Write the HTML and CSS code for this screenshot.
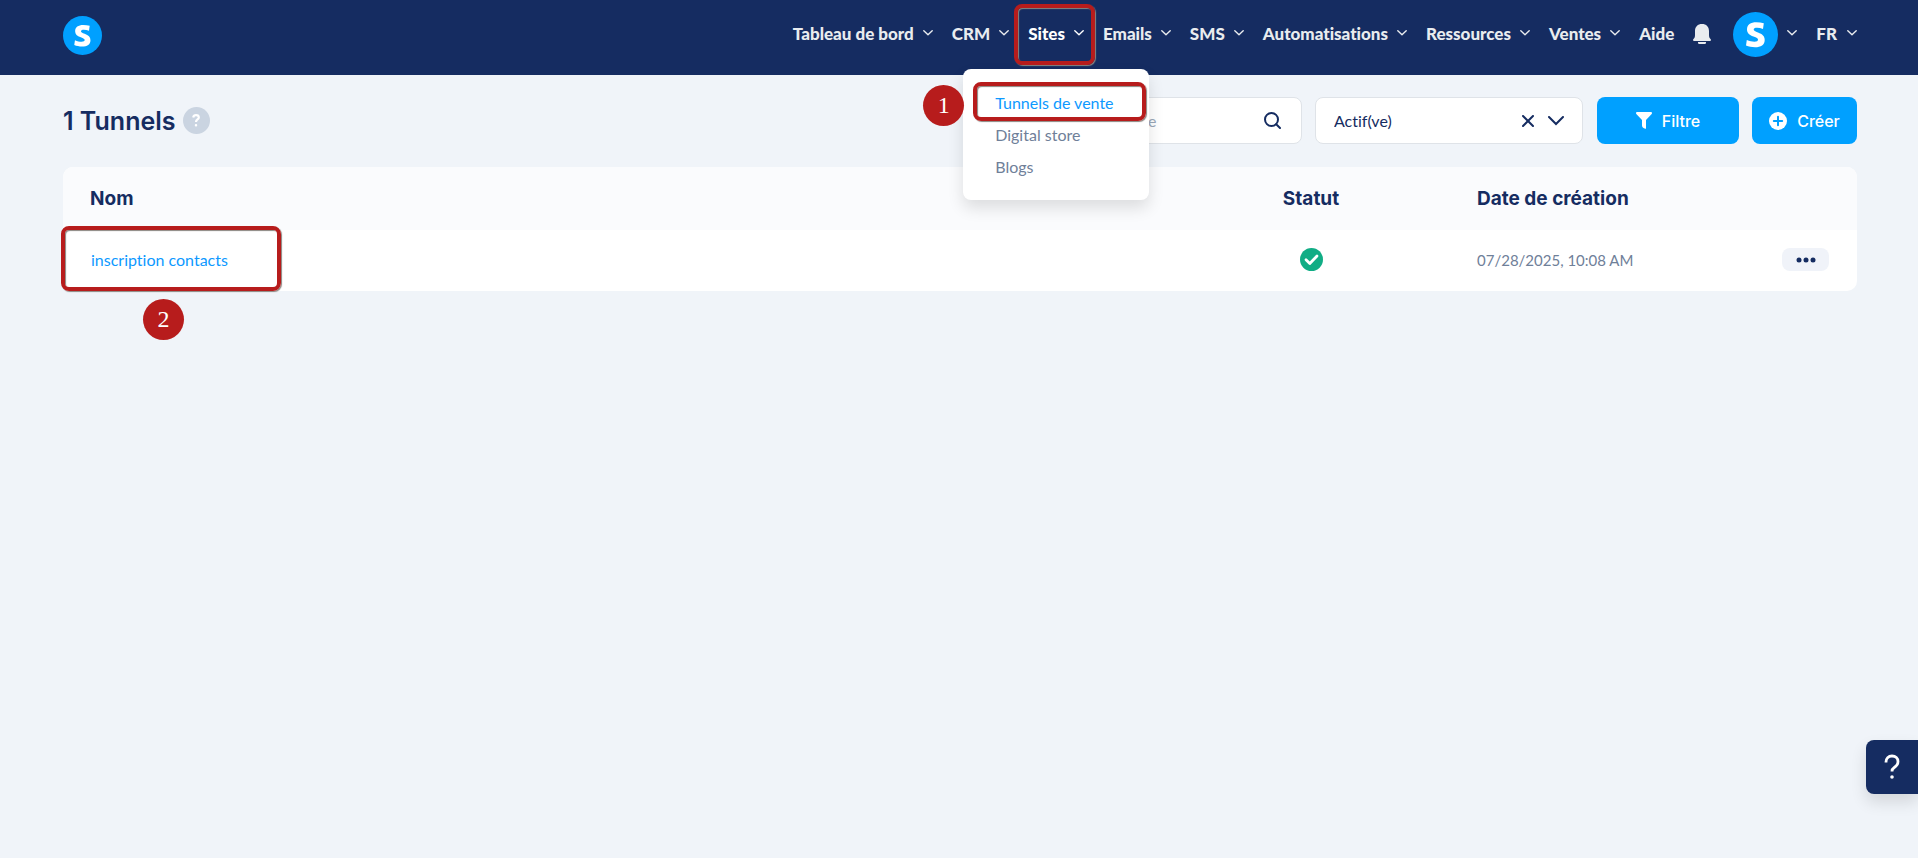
FILE: index.html
```html
<!DOCTYPE html>
<html lang="fr">
<head>
<meta charset="utf-8">
<title>Tunnels</title>
<link rel="stylesheet" href="styles.css">
</head>
<body>
<svg class="defs" aria-hidden="true">
  <symbol id="chev" viewBox="0 0 10 6"><path d="M.8.8 5 4.8 9.2.8" fill="none" stroke="currentColor" stroke-width="1.4" stroke-linecap="round" stroke-linejoin="round"/></symbol>
  <symbol id="logo" viewBox="0 0 45 45"><circle cx="22.500" cy="22.500" r="22.500" fill="#00a0ff"/><path d="M30.800 11.300 30 17c-2-.8-4-1.200-6-1.200-2.200 0-3.300.6-3.300 1.800 0 1.300 1.500 1.900 4.300 3 4.400 1.700 6.700 3.700 6.700 7.300 0 5-3.800 7.300-9.700 7.300-3.300 0-6.300-.6-9-1.700l.8-5.500c2.800 1.200 5.200 1.700 7.600 1.700 2.400 0 3.600-.6 3.600-1.900 0-1.300-1.300-1.900-4.500-3.200-4.400-1.700-6.500-3.600-6.500-7.100 0-4.800 3.600-7.200 9.300-7.200 2.700 0 5.200.3 7.500 1Z" fill="#fff"/></symbol>
</svg>
<header class="topbar">
  <a class="brand" href="#" aria-label="Accueil"><svg><use href="#logo"/></svg></a>
  <nav class="nav">
    <a href="#">Tableau de bord <svg class="chev"><use href="#chev"/></svg></a>
    <a href="#">CRM <svg class="chev"><use href="#chev"/></svg></a>
    <div class="nav-group">
      <a class="active" href="#">Sites <svg class="chev"><use href="#chev"/></svg></a>
      <span class="mark mark-sites"></span>
      <div class="menu">
        <a class="current" href="#">Tunnels de vente<span class="mark mark-item"></span></a>
        <a href="#">Digital store</a>
        <a href="#">Blogs</a>
        <span class="step step-one">1</span>
      </div>
    </div>
    <a href="#">Emails <svg class="chev"><use href="#chev"/></svg></a>
    <a href="#">SMS <svg class="chev"><use href="#chev"/></svg></a>
    <a href="#">Automatisations <svg class="chev"><use href="#chev"/></svg></a>
    <a href="#">Ressources <svg class="chev"><use href="#chev"/></svg></a>
    <a href="#">Ventes <svg class="chev"><use href="#chev"/></svg></a>
    <a href="#">Aide</a>
    <button class="bell" aria-label="Notifications"><svg viewBox="0 0 18 20"><path d="M9 0c4.300 0 7 2.700 7 7v4c0 2 .5 3 1.500 4 .8 1 .5 2-.5 2H1c-1 0-1.300-1-.5-2C1.500 14 2 13 2 11V7c0-4.300 2.700-7 7-7ZM5 18h8v.8q0 1.200-1.200 1.200H6.200Q5 20 5 18.800Z" fill="currentColor"/></svg></button>
    <a class="account" href="#" aria-label="Compte"><svg class="avatar"><use href="#logo"/></svg><svg class="chev"><use href="#chev"/></svg></a>
    <a class="lang" href="#">FR <svg class="chev"><use href="#chev"/></svg></a>
  </nav>
</header>
<main class="page">
  <div class="toolbar">
    <h1>1 Tunnels</h1>
    <button class="hint" aria-label="Aide"><svg viewBox="0 0 8 13"><path d="M1.200 3.500C1.500 2 2.500 1.200 4 1.200c1.700 0 2.800.9 2.800 2.300C6.800 5.500 4 5.500 4 8" fill="none" stroke="#fff" stroke-width="2.200"/><rect x="2.800" y="10" width="2.400" height="2.500" rx="1" fill="#fff"/></svg></button>
    <div class="search">
      <input type="text" placeholder="Recherche" aria-label="Recherche">
      <button aria-label="Rechercher"><svg viewBox="0 0 17 17"><circle cx="7.500" cy="7.500" r="6.500"/><path d="m12.200 12.200 3.800 3.800"/></svg></button>
    </div>
    <div class="select">
      <select aria-label="Statut"><option>Actif(ve)</option></select>
      <button aria-label="Effacer"><svg class="x" viewBox="0 0 12 12"><path d="m1 1 10 10M11 1 1 11"/></svg></button>
      <svg class="caret" viewBox="0 0 16 10"><path d="m1 1 7 7 7-7"/></svg>
    </div>
    <button class="btn btn-filter"><svg viewBox="0 0 16 17"><path d="M1 0h14q1 0 1 1 0 .5-.3.900L10 8v8.200q0 .8-.8.600L7.500 16Q6 15.200 6 13.500V8L.3 1.900Q0 1.500 0 1 0 0 1 0Z" fill="currentColor"/></svg>Filtre</button>
    <button class="btn"><svg viewBox="0 0 18 18"><circle cx="9" cy="9" r="9" fill="currentColor"/><path d="M9 4.800v8.400M4.800 9h8.400" stroke="#00a0ff" stroke-width="2" stroke-linecap="round"/></svg>Créer</button>
  </div>
  <table class="list">
    <thead>
      <tr><th>Nom</th><th class="c-status">Statut</th><th class="c-date">Date de création</th><th class="c-more"></th></tr>
    </thead>
    <tbody>
      <tr>
        <td class="c-name"><a href="#">inscription contacts</a><span class="mark mark-row"></span><span class="step step-two">2</span></td>
        <td class="c-status"><svg class="ok" viewBox="0 0 23 23"><circle cx="11.500" cy="11.500" r="11.500" fill="#11ad85"/><path d="m6 11.800 3.800 3.700 7.200-7.500" fill="none" stroke="#fff" stroke-width="2.800" stroke-linecap="round" stroke-linejoin="round"/></svg></td>
        <td class="c-date">07/28/2025, 10:08 AM</td>
        <td class="c-more"><button class="more" aria-label="Actions"><svg viewBox="0 0 20 6"><circle cx="3" cy="3" r="2.500"/><circle cx="10" cy="3" r="2.500"/><circle cx="17" cy="3" r="2.500"/></svg></button></td>
      </tr>
    </tbody>
  </table>
</main>
<button class="support" aria-label="Support"><svg viewBox="0 0 16 26"><path d="M2 8.500V8c0-3.500 2.400-6 6-6s6 2.400 6 5.600c0 3.600-2 4.900-4 6.100-1.500.9-2 1.600-2 3.800" fill="none" stroke="#fff" stroke-width="2.800"/><circle cx="8" cy="23" r="1.800" fill="#fff"/></svg></button>
</body>
</html>
```
FILE: styles.css
```css
* { box-sizing: border-box; }

body {
  margin: 0;
  min-height: 100vh;
  background: #f0f4f9;
  color: #152c61;
  font: 16px/24px Lato, "Open Sans", sans-serif;
  font-variant-ligatures: none;
}

a { color: inherit; text-decoration: none; }

button {
  padding: 0;
  border: 0;
  background: none;
  color: inherit;
  font: inherit;
  cursor: pointer;
}

svg { display: block; flex: none; }
.defs { position: absolute; width: 0; height: 0; }
.chev { width: 10px; height: 6px; margin-bottom: 2px; }

/* Top bar */
.topbar {
  display: flex;
  align-items: flex-start;
  justify-content: space-between;
  height: 75px;
  padding: 0 61px 0 63px;
  background: #152c61;
}

.brand { margin-top: 16px; }
.brand svg { width: 39px; height: 39px; }

.nav {
  display: flex;
  align-items: center;
  gap: 19px;
  height: 68px;
  color: #e9ecef;
  font-size: 17px;
  font-weight: 900;
}

.nav a { display: flex; align-items: center; gap: 9px; }
.nav .active { color: #fff; }
.nav-group { position: relative; }
.bell svg { width: 18px; height: 20px; }
.account { margin-left: 3px; }
.avatar { width: 45px; height: 45px; }
.nav .lang { gap: 10px; }

.menu {
  position: absolute;
  z-index: 5;
  top: 47px;
  left: -65px;
  width: 186px;
  padding: 18px 32px 17px;
  border-radius: 8px;
  background: #fff;
  box-shadow: 0 8px 16px rgba(0, 0, 0, .12);
  color: #6f8099;
  font-size: 16px;
  font-weight: 400;
}

.menu a { position: relative; height: 32px; white-space: nowrap; }
.menu .current { color: #0d99ff; }

/* Tour markers */
.mark {
  position: absolute;
  z-index: 6;
  border: 4px solid #b71c1c;
  border-radius: 8px;
  box-shadow: 1px 1px 1px #8a8580, inset 1px 1px 1px #8a8580;
  pointer-events: none;
}

.mark-sites { inset: -18px -11px -19px -14px; }
.mark-item { top: -5px; left: -22px; width: 173px; height: 39px; }
.mark-row { top: -4px; left: -2px; width: 220px; height: 65px; }

.step {
  position: absolute;
  z-index: 6;
  width: 41px;
  height: 41px;
  border-radius: 50%;
  background: #b71c1c;
  color: #fff;
  font: 24px/41px "Liberation Serif", serif;
  text-align: center;
}

.step-one { top: 16px; left: -40px; }
.step-two { top: 69px; left: 80px; }

/* Page */
.page { padding: 22px 61px 0 63px; }

.toolbar { display: flex; align-items: center; margin-bottom: 23px; }

h1 {
  margin: 0 7px 0 0;
  font: 600 25px/32px Inter, sans-serif;
}

.hint {
  display: grid;
  place-items: center;
  width: 27px;
  height: 27px;
  border-radius: 50%;
  background: #cad4e1;
}

.hint svg { width: 8px; height: 13px; }

.search, .select {
  display: flex;
  align-items: center;
  height: 47px;
  border: 1px solid #dfe3e8;
  border-radius: 8px;
  background: #fff;
}

.search { width: 238px; margin-left: auto; padding: 0 20px 0 18px; }

.search input, .select select {
  flex: 1;
  min-width: 0;
  padding: 0;
  border: 0;
  outline: 0;
  background: none;
  appearance: none;
  color: #152c61;
  font: inherit;
}

.search input::placeholder { color: #9aa8b8; opacity: 1; }
.search svg { width: 17px; height: 17px; }
.search svg, .select svg { fill: none; stroke: #152c61; stroke-width: 2; stroke-linecap: round; }
.select { width: 268px; margin: 0 14px 0 13px; padding: 0 18px; }
.select .x { width: 12px; height: 12px; }
.select .caret { width: 16px; height: 10px; margin-left: 14px; }

.btn {
  display: flex;
  align-items: center;
  justify-content: center;
  gap: 10px;
  width: 105px;
  height: 47px;
  border-radius: 8px;
  background: #00a0ff;
  color: #fff;
  font: 500 16px/24px Inter, sans-serif;
}

.btn svg { width: 18px; height: 18px; }
.btn-filter { width: 142px; margin-right: 13px; }
.btn-filter svg { width: 16px; height: 17px; }

/* List */
.list {
  width: 100%;
  border-spacing: 0;
  table-layout: fixed;
  border-radius: 10px;
  background: #fff;
}

.list th {
  height: 63px;
  padding: 0 0 0 27px;
  background: #fafbfd;
  font: 700 19px/24px Inter, sans-serif;
  text-align: left;
}

.list th:first-child { border-top-left-radius: 10px; }
.list th:last-child { border-top-right-radius: 10px; }
.list td { height: 61px; padding: 0 0 2px 28px; color: #6f8099; }
.list .c-name { position: relative; }
.c-name a { color: #0d99ff; }
.list .c-status { width: 332px; padding-left: 0; text-align: center; }
.ok { width: 23px; height: 23px; margin: 0 auto; }
.list .c-date { width: 305px; padding-left: 0; }
.list td.c-date { font-size: 15px; }
.list .c-more { width: 75px; padding-left: 0; }

.more {
  display: grid;
  place-items: center;
  width: 47px;
  height: 23px;
  border-radius: 8px;
  background: #f0f3f9;
}

.more svg { width: 20px; height: 6px; fill: #152c61; }

.support {
  position: fixed;
  right: 0;
  bottom: 64px;
  display: grid;
  place-items: center;
  width: 52px;
  height: 54px;
  border-radius: 8px 0 0 8px;
  background: #152c61;
  box-shadow: 0 8px 16px rgba(0, 0, 0, .12);
}

.support svg { width: 16px; height: 26px; }
```
